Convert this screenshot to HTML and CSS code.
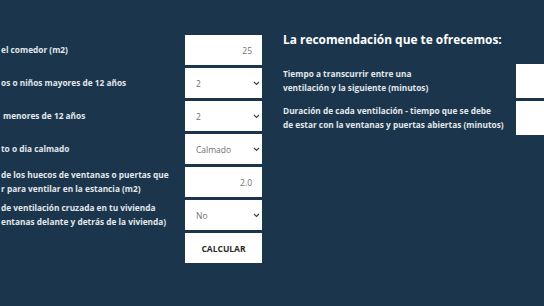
FILE: index.html
```html
<!DOCTYPE html>
<html lang="es">
<head>
<meta charset="utf-8">
<title>Calculadora de ventilación</title>
<link rel="stylesheet" href="styles.css">
</head>
<body>
<main class="page">
  <form class="calc">
    <label class="lbl" for="f1">el comedor (m2)</label>
    <input class="field num" id="f1" type="text" value="25">

    <label class="lbl" for="f2">os o niños mayores de 12 años</label>
    <div class="selwrap">
      <select class="field sel" id="f2"><option>2</option></select>
      <svg class="chev" viewBox="0 0 8 6" width="7" height="5"><path d="M1 1.2 L4 4.2 L7 1.2" fill="none" stroke="#444" stroke-width="1.4"/></svg>
    </div>

    <label class="lbl indent" for="f3">menores de 12 años</label>
    <div class="selwrap">
      <select class="field sel" id="f3"><option>2</option></select>
      <svg class="chev" viewBox="0 0 8 6" width="7" height="5"><path d="M1 1.2 L4 4.2 L7 1.2" fill="none" stroke="#444" stroke-width="1.4"/></svg>
    </div>

    <label class="lbl" for="f4">to o dia calmado</label>
    <div class="selwrap">
      <select class="field sel" id="f4"><option>Calmado</option></select>
      <svg class="chev" viewBox="0 0 8 6" width="7" height="5"><path d="M1 1.2 L4 4.2 L7 1.2" fill="none" stroke="#444" stroke-width="1.4"/></svg>
    </div>

    <label class="lbl" for="f5">de los huecos de ventanas o puertas que<br>r para ventilar en la estancia (m2)</label>
    <input class="field num" id="f5" type="text" value="2.0">

    <label class="lbl" for="f6">de ventilación cruzada en tu vivienda<br>entanas delante y detrás de la vivienda)</label>
    <div class="selwrap">
      <select class="field sel" id="f6"><option>No</option></select>
      <svg class="chev" viewBox="0 0 8 6" width="7" height="5"><path d="M1 1.2 L4 4.2 L7 1.2" fill="none" stroke="#444" stroke-width="1.4"/></svg>
    </div>

    <span class="lbl"></span>
    <button class="btn" type="button">CALCULAR</button>
  </form>

  <section class="result">
    <h2 class="title">La recomendación que te ofrecemos:</h2>
    <div class="res-row">
      <p class="res-lbl">Tiempo a transcurrir entre una<br>ventilación y la siguiente (minutos)</p>
      <div class="res-box"></div>
    </div>
    <div class="res-row">
      <p class="res-lbl">Duración de cada ventilación - tiempo que se debe<br>de estar con la ventanas y puertas abiertas (minutos)</p>
      <div class="res-box"></div>
    </div>
  </section>
</main>
</body>
</html>
```
FILE: styles.css
```css
* { box-sizing: border-box; }
html, body {
  margin: 0;
  height: 100%;
  background: #1b364c;
  overflow: hidden;
}
body {
  font-family: "Open Sans", "Noto Sans", sans-serif;
  color: #e2e7eb;
}
.page {
  display: flex;
  align-items: flex-start;
  padding-top: 30px;
  width: 100%;
}
.calc {
  display: grid;
  grid-template-columns: 175px 77px;
  column-gap: 10px;
  row-gap: 3px;
  grid-auto-rows: 30px;
  margin: 5px 0 0 0;
  flex: none;
}
.lbl {
  display: flex;
  align-items: center;
  font-size: 8.3px;
  font-weight: 700;
  line-height: 14px;
  padding-left: 1px;
  white-space: nowrap;
  overflow: hidden;
}
.indent { padding-left: 3px; }
.field {
  width: 77px;
  height: 30px;
  border: none;
  border-radius: 0;
  background: #fff;
  font-family: "Open Sans", "Noto Sans", sans-serif;
  font-size: 8.5px;
  color: #707070;
  margin: 0;
  outline: none;
}
.num {
  text-align: right;
  padding: 0 10px 0 8px;
}
.selwrap {
  position: relative;
  width: 77px;
  height: 30px;
}
.sel {
  display: block;
  appearance: none;
  -webkit-appearance: none;
  padding: 0 14px 0 11px;
}
.chev {
  position: absolute;
  right: 2px;
  top: 13px;
  pointer-events: none;
}
.btn {
  width: 77px;
  height: 30px;
  border: none;
  background: #fff;
  font-family: "Open Sans", "Noto Sans", sans-serif;
  font-size: 8.5px;
  font-weight: 700;
  color: #2b2b2b;
  padding: 0;
}
.result {
  margin-left: 21px;
  flex: 1;
  min-width: 0;
  overflow: hidden;
}
.title {
  margin: 0 0 16px 0;
  font-size: 11.9px;
  line-height: 18px;
  font-weight: 700;
  color: #fff;
  white-space: nowrap;
}
.res-row {
  display: flex;
  align-items: center;
  margin-bottom: 3px;
}
.res-lbl {
  margin: 0;
  width: 233px;
  flex: none;
  font-size: 8.3px;
  font-weight: 700;
  line-height: 14px;
  white-space: nowrap;
}
.res-box {
  flex: none;
  width: 60px;
  height: 34px;
  background: #fff;
}
```
